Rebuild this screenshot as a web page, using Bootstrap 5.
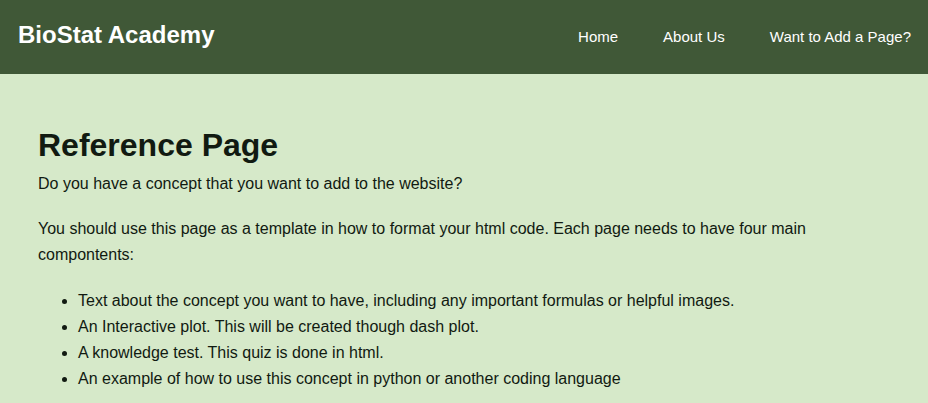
<!DOCTYPE html>
<html lang="en">
<head>
<meta charset="utf-8">
<meta name="viewport" content="width=device-width, initial-scale=1">
<title>BioStat Academy</title>
<link href="https://cdn.jsdelivr.net/npm/bootstrap@5.3.0/dist/css/bootstrap.min.css" rel="stylesheet">
<style>
body { background: #d6e9c9; color: #111a11; font-family: "Liberation Sans", Arial, sans-serif; font-size: 16px; line-height: 26px; }
.site-header { background: #405837; padding: 16px 17px 20px 18px; }
.site-header .navbar-brand { color: #fff; font-size: 24px; line-height: 38px; font-weight: 700; padding: 0; margin: 0; }
.site-links { gap: 45px; }
.site-links .nav-link { color: #fff; font-size: 15px; line-height: 26px; padding: 4px 0 0; }
.page-body { padding: 50px 38px 0; }
.page-body h1 { font-size: 32px; line-height: 42px; font-weight: 700; margin-bottom: 5px; }
.page-body p { margin-bottom: 19px; }
.page-body ul { padding-left: 40px; margin-top: 20px; }
</style>
</head>
<body>
<header class="site-header d-flex justify-content-between align-items-center">
  <a class="navbar-brand" href="#">BioStat Academy</a>
  <nav aria-label="Main">
    <ul class="site-links nav">
      <li class="nav-item"><a class="nav-link" href="#">Home</a></li>
      <li class="nav-item"><a class="nav-link" href="#">About Us</a></li>
      <li class="nav-item"><a class="nav-link" href="#">Want to Add a Page?</a></li>
    </ul>
  </nav>
</header>
<main class="page-body">
  <h1>Reference Page</h1>
  <p>Do you have a concept that you want to add to the website?</p>
  <p>You should use this page as a template in how to format your html code. Each page needs to have four main compontents:</p>
  <ul class="mb-0">
    <li>Text about the concept you want to have, including any important formulas or helpful images.</li>
    <li>An Interactive plot. This will be created though dash plot.</li>
    <li>A knowledge test. This quiz is done in html.</li>
    <li>An example of how to use this concept in python or another coding language</li>
  </ul>
</main>
<script src="https://cdn.jsdelivr.net/npm/bootstrap@5.3.0/dist/js/bootstrap.bundle.min.js"></script>
</body>
</html>
